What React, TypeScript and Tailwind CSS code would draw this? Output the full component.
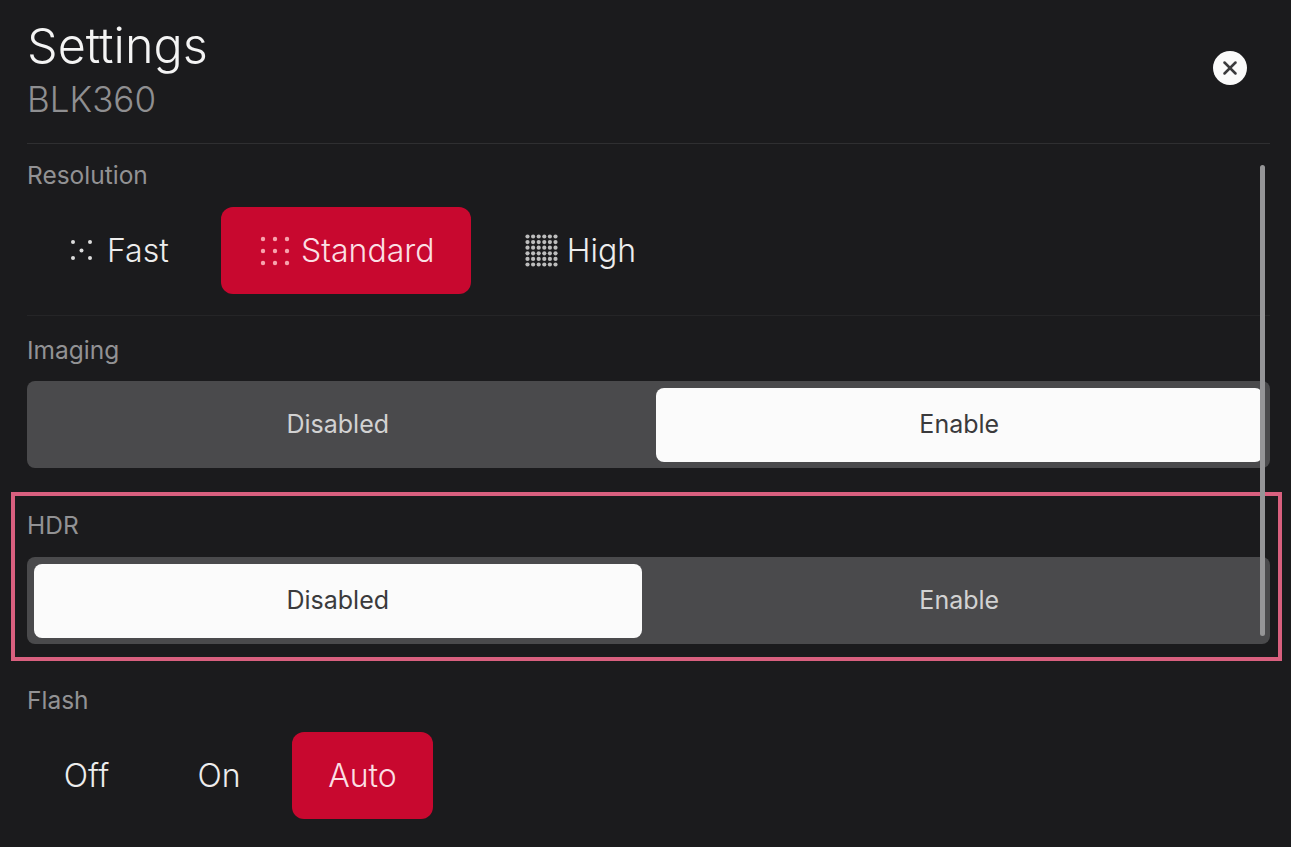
import { X } from "lucide-react";

const Dots = ({ size, points, r, fill }: { size: number; points: number[][]; r: number; fill: string }) => (
  <svg width={size} height={size} viewBox={`0 0 ${size} ${size}`} className="shrink-0">
    {points.map(([x, y]) => (
      <circle key={`${x}-${y}`} cx={x} cy={y} r={r} fill={fill} />
    ))}
  </svg>
);

const grid = (count: number, start: number, step: number) =>
  Array.from({ length: count * count }, (_, i) => [start + (i % count) * step, start + Math.floor(i / count) * step]);

const FastIcon = () => (
  <Dots size={24} r={2} fill="#dcdcdc" points={[[3, 3], [20, 3], [11.5, 11.5], [3, 19], [20, 19]]} />
);
const StandardIcon = () => <Dots size={30} r={2.2} fill="#f7a3ad" points={grid(3, 3, 12)} />;
const HighIcon = () => <Dots size={33} r={2.1} fill="#bdbdbd" points={grid(6, 2.5, 5.6)} />;

const Segmented = ({ active }: { active: "Disabled" | "Enable" }) => (
  <div className="grid h-[87px] grid-cols-2 gap-[14px] rounded-lg bg-[#4a4a4c] p-[7px] pb-[6px]">
    {["Disabled", "Enable"].map((label) => (
      <div
        key={label}
        className={
          label === active
            ? "flex items-center justify-center rounded-lg bg-[#fbfbfb] text-[25px] text-[#3a3a3c]"
            : "flex items-center justify-center text-[25px] text-[#d2d2d2]"
        }
      >
        {label}
      </div>
    ))}
  </div>
);

const Label = ({ children }: { children: string }) => (
  <div className="mb-5 h-6 text-[24.5px] leading-6 text-[#929294]">{children}</div>
);

export default function App() {
  return (
    <div
      className="relative h-[847px] w-[1291px] overflow-hidden bg-[#1b1b1d] pl-[27px] pr-[21px]"
      style={{ fontFamily: "Inter, 'Noto Sans', sans-serif" }}
    >
      {/* Header */}
      <div className="flex h-[144px] items-start justify-between border-b border-[#2f2f31]">
        <div>
          <div className="mt-[19px] text-[48.5px] font-light leading-[54px] text-[#f4f4f4]">Settings</div>
          <div className="mt-[5px] text-[35px] font-light leading-[42px] text-[#8f8f91]">BLK360</div>
        </div>
        <div className="mr-[23px] mt-[51px] flex h-[34px] w-[34px] items-center justify-center rounded-full bg-[#fafafa]">
          <X size={22} strokeWidth={2.75} className="text-[#3a3a3c]" />
        </div>
      </div>

      {/* Resolution */}
      <section className="h-[172px] border-b border-[#252527] pt-[19px]">
        <Label>Resolution</Label>
        <div className="flex h-[87px] gap-[14px] text-[32px] font-light">
          <div className="flex w-[180px] items-center gap-[13px] pl-[43px] text-[#ededed]">
            <FastIcon />
            Fast
          </div>
          <div className="flex w-[250px] items-center gap-[11px] rounded-xl bg-[#c8082f] pl-[39px] text-[#fbdfe3]">
            <StandardIcon />
            Standard
          </div>
          <div className="flex w-[191px] items-center justify-center gap-[9px] text-[#ededed]">
            <HighIcon />
            High
          </div>
        </div>
      </section>

      {/* Imaging */}
      <section className="h-[176px] pt-[22px]">
        <Label>Imaging</Label>
        <div className="-mt-px">
          <Segmented active="Enable" />
        </div>
      </section>

      {/* HDR */}
      <section className="relative h-[175px] pt-[21px]">
        <Label>HDR</Label>
        <Segmented active="Disabled" />
        <div className="absolute left-[-16px] right-[-12px] top-0 h-[169px] border-4 border-[#d9607f]" />
      </section>

      {/* Flash */}
      <section className="pt-[21px]">
        <Label>Flash</Label>
        <div className="flex h-[87px] gap-[14px] text-[32px] font-light">
          <div className="flex w-[119px] items-center justify-center text-[#ededed]">Off</div>
          <div className="flex w-[118px] items-center justify-center text-[#ededed]">On</div>
          <div className="flex w-[141px] items-center justify-center rounded-xl bg-[#c8082f] text-[#fbdfe3]">Auto</div>
        </div>
      </section>

      {/* Scrollbar */}
      <div className="absolute left-[1260px] top-[165px] h-[471px] w-[5px] rounded-full bg-[#959597]" />
    </div>
  );
}
